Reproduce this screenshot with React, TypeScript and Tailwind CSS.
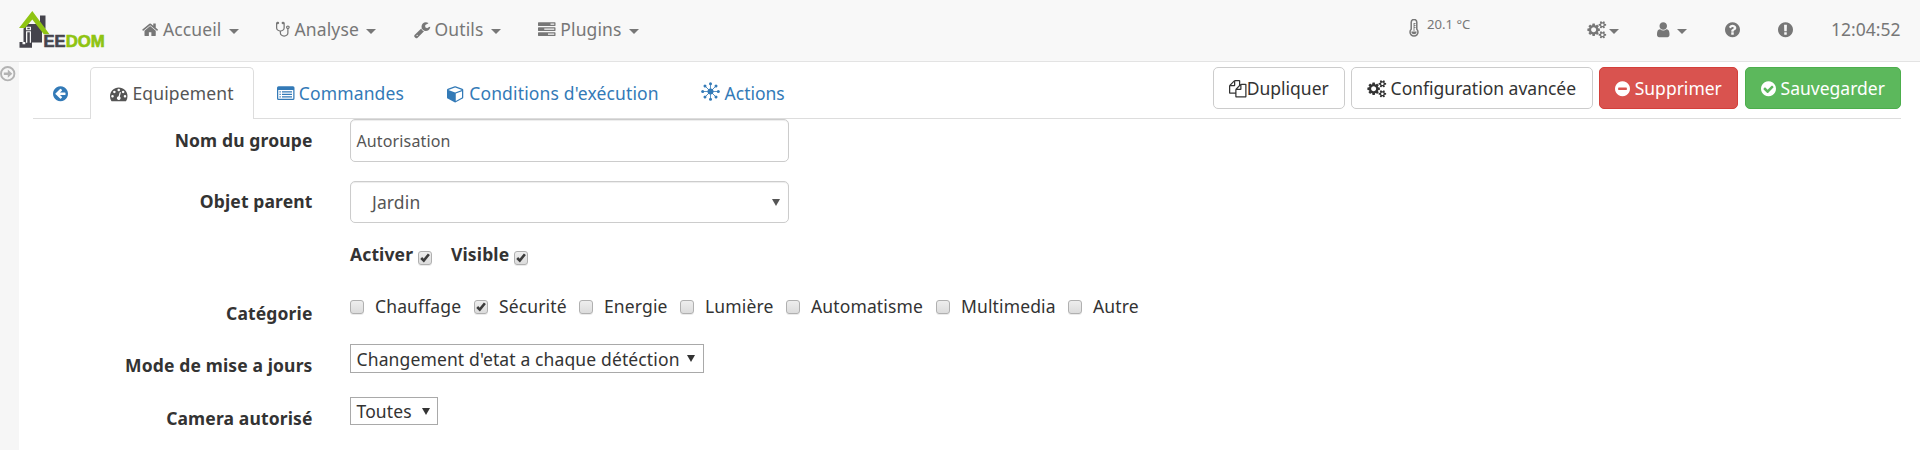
import React from "react";

const DISC =
  "M1664 896q0 209-103 385.5t-279.5 279.5-385.5 103-385.5-103-279.5-279.5-103-385.5 103-385.5 279.5-279.5 385.5-103 385.5 103 279.5 279.5 103 385.5z";
const SMALL_COG =
  "v140q0 16-149 31-12 27-30 52 51 113 51 138 0 4-4 7-122 71-124 71-8 0-46-47t-52-68q-20 2-30 2t-30-2q-14 21-52 68t-46 47q-2 0-124-71-4-3-4-7 0-25 51-138-18-25-30-52-149-15-149-31v-140q0-16 149-31 13-29 30-52-51-113-51-138 0-4 4-7 4-2 35-20t59-34 30-16q8 0 46 46.5t52 67.5q20-2 30-2t30 2q51-71 92-112l6-2q4 0 124 70 4 3 4 7 0 25-51 138 17 23 30 52 149 15 149 31z";

// name: [left, advance, path], in units of 1792 per em
const ICONS: Record<string, [number, number, string]> = {
  home: [64, 1664, "M1472 992v480q0 26-19 45t-45 19h-384v-384h-256v384h-384q-26 0-45-19t-19-45v-480q0-1 .5-3t.5-3l575-474 575 474q1 2 1 6zm223-69l-62 74q-8 9-21 11h-3q-13 0-21-7l-692-577-692 577q-12 8-24 7-13-2-21-11l-62-74q-8-10-7-23.5t11-21.5l719-599q32-26 76-26t76 26l244 204v-195q0-14 9-23t23-9h192q14 0 23 9t9 23v408l219 182q10 8 11 21.5t-7 23.5z"],
  stethoscope: [64, 1408, "M1344 640q0-26-19-45t-45-19-45 19-19 45 19 45 45 19 45-19 19-45zm128 0q0 62-35.5 111t-92.5 70v395q0 159-131.5 271.5t-316.5 112.5-316.5-112.5-131.5-271.5v-132q-164-20-274-128t-110-252v-512q0-26 19-45t45-19q6 0 16 2 17-30 47-48t65-18q53 0 90.5 37.5t37.5 90.5-37.5 90.5-90.5 37.5q-33 0-64-18v402q0 106 94 181t226 75 226-75 94-181v-402q-31 18-64 18-53 0-90.5-37.5t-37.5-90.5 37.5-90.5 90.5-37.5q35 0 65 18t47 48q10-2 16-2 26 0 45 19t19 45v512q0 144-110 252t-274 128v132q0 106 94 181t226 75 226-75 94-181v-395q-57-21-92.5-70t-35.5-111q0-80 56-136t136-56 136 56 56 136z"],
  wrench: [64, 1664, "M448 1472q0-26-19-45t-45-19-45 19-19 45 19 45 45 19 45-19 19-45zm644-420l-682 682q-37 37-90 37-52 0-91-37l-106-108q-38-36-38-90 0-53 38-91l681-681q39 98 114.5 173.5t173.5 114.5zm634-435q0 39-23 106-47 134-164.5 217.5t-258.5 83.5q-185 0-316.5-131.5t-131.5-316.5 131.5-316.5 316.5-131.5q58 0 121.5 16.5t107.5 46.5q16 11 16 28t-16 28l-293 169v224l193 107q5-3 79-48.5t135.5-81 70.5-35.5q15 0 23.5 10t8.5 25z"],
  tasks: [0, 1792, "M1024 1408h640v-128h-640v128zm-384-512h1024v-128h-1024v128zm640-512h384v-128h-384v128zm512 832v256q0 26-19 45t-45 19h-1664q-26 0-45-19t-19-45v-256q0-26 19-45t45-19h1664q26 0 45 19t19 45zm0-512v256q0 26-19 45t-45 19h-1664q-26 0-45-19t-19-45v-256q0-26 19-45t45-19h1664q26 0 45 19t19 45zm0-512v256q0 26-19 45t-45 19h-1664q-26 0-45-19t-19-45v-256q0-26 19-45t45-19h1664q26 0 45 19t19 45z"],
  gauge: [0, 1792, "M384 1152q0-53-37.5-90.5t-90.5-37.5-90.5 37.5-37.5 90.5 37.5 90.5 90.5 37.5 90.5-37.5 37.5-90.5zm192-448q0-53-37.5-90.5t-90.5-37.5-90.5 37.5-37.5 90.5 37.5 90.5 90.5 37.5 90.5-37.5 37.5-90.5zm428 481l101-382q6-26-7.5-48.5t-38.5-29.5-48 6.5-30 39.5l-101 382q-60 5-107 43.5t-63 98.5q-20 77 20 146t117 89 146-20 89-117q16-60-6-117t-72-91zm660-33q0-53-37.5-90.5t-90.5-37.5-90.5 37.5-37.5 90.5 37.5 90.5 90.5 37.5 90.5-37.5 37.5-90.5zm-640-640q0-53-37.5-90.5t-90.5-37.5-90.5 37.5-37.5 90.5 37.5 90.5 90.5 37.5 90.5-37.5 37.5-90.5zm448 192q0-53-37.5-90.5t-90.5-37.5-90.5 37.5-37.5 90.5 37.5 90.5 90.5 37.5 90.5-37.5 37.5-90.5zm320 448q0 261-141 483-19 29-54 29h-1402q-35 0-54-29-141-221-141-483 0-182 71-348t191-286 286-191 348-71 348 71 286 191 191 286 71 348z"],
  list: [0, 1792, "M160 128h1472a160 160 0 0 1 160 160v1088a160 160 0 0 1-160 160H160A160 160 0 0 1 0 1376V288A160 160 0 0 1 160 128zM128 512v832q0 64 32 64h1472q32 0 32-64V512zM256 640h128v128H256zM512 640h1024v128H512zM256 896h128v128H256zM512 896h1024v128H512zM256 1152h128v128H256zM512 1152h1024v128H512z"],
  cube: [0, 1792, "M896 1629l640-349v-636l-640 233v752zm-64-865l698-254-698-254-698 254zm832-252v768q0 35-18 65t-49 47l-704 384q-28 16-61 16t-61-16l-704-384q-31-17-49-47t-18-65v-768q0-40 23-73t61-47l704-256q22-8 44-8t44 8l704 256q38 14 61 47t23 73z"],
  copy: [0, 1792, "M1696 384q40 0 68 28t28 68v1216q0 40-28 68t-68 28h-960q-40 0-68-28t-28-68v-288h-544q-40 0-68-28t-28-68v-672q0-40 20-88t48-76l408-408q28-28 76-48t88-20h416q40 0 68 28t28 68v328q68-40 128-40h416zm-544 213l-299 299h299v-299zm-640-384l-299 299h299v-299zm196 647l316-316v-416h-384v416q0 40-28 68t-68 28h-416v640h512v-256q0-40 20-88t48-76zm956 804v-1152h-384v416q0 40-28 68t-68 28h-416v640h896z"],
  cogs: [0, 1856, "M832 896q0-106-75-181t-181-75-181 75-75 181 75 181 181 75 181-75 75-181zm768 512q0-52-38-90t-90-38-90 38-38 90q0 53 37.5 90.5t90.5 37.5 90.5-37.5 37.5-90.5zm0-1024q0-52-38-90t-90-38-90 38-38 90q0 53 37.5 90.5t90.5 37.5 90.5-37.5 37.5-90.5zm-384 421v185q0 10-7 19.5t-16 10.5l-155 24q-11 35-32 76 34 48 90 115 7 11 7 20 0 12-7 19-23 30-82.5 89.5t-78.5 59.5q-11 0-21-7l-115-90q-37 19-77 31-11 108-23 155-7 24-30 24h-186q-11 0-20-7.5t-10-17.5l-23-153q-34-10-75-31l-118 89q-7 7-20 7-11 0-21-8-144-133-144-160 0-9 7-19 10-14 41-53t47-61q-23-44-35-82l-152-24q-10-1-17-9.5t-7-19.5v-185q0-10 7-19.5t16-10.5l155-24q11-35 32-76-34-48-90-115-7-11-7-20 0-12 7-20 22-30 82-89t79-59q11 0 21 7l115 90q34-18 77-32 11-108 23-154 7-24 30-24h186q11 0 20 7.5t10 17.5l23 153q34 10 75 31l118-89q8-7 20-7 11 0 21 8 144 133 144 160 0 8-7 19-12 16-42 54t-45 60q23 48 34 82l152 23q10 2 17 10.5t7 19.5zM1856 1338" + SMALL_COG + "M1856 314" + SMALL_COG],
  user: [256, 1280, "M1536 1399q0 109-62.5 187t-150.5 78h-854q-88 0-150.5-78t-62.5-187q0-85 8.5-160.5t31.5-152 58.5-131 94-89 134.5-34.5q131 128 313 128t313-128q76 0 134.5 34.5t94 89 58.5 131 31.5 152 8.5 160.5zm-256-887q0 159-112.5 271.5t-271.5 112.5-271.5-112.5-112.5-271.5 112.5-271.5 271.5-112.5 271.5 112.5 112.5 271.5z"],
  question: [128, 1536, "M1024 1376v-192q0-14-9-23t-23-9h-192q-14 0-23 9t-9 23v192q0 14 9 23t23 9h192q14 0 23-9t9-23zm256-672q0-88-55.5-163t-138.5-116-170-41q-243 0-371 213-15 24 8 42l132 100q7 6 19 6 16 0 25-12 53-68 86-92 34-24 86-24 48 0 85.5 26t37.5 59q0 38-20 61t-68 45q-63 28-115.5 86.5t-52.5 125.5v36q0 14 9 23t23 9h192q14 0 23-9t9-23q0-19 21.5-49.5t54.5-49.5q32-18 49-28.5t46-35 44.5-48 28-60.5 12.5-81z" + DISC],
  exclamation: [128, 1536, "M1024 1375v-190q0-14-9.5-23.5t-22.5-9.5h-192q-13 0-23 10t-10 23v190q0 13 10 23t23 10h192q13 0 22.5-9.5t9.5-23.5zm-2-344l18-621q0-12-10-18-10-8-24-8h-220q-14 0-24 8-10 6-10 18l17 621q0 10 10 17.5t24 7.5h185q14 0 23.5-7.5t10.5-17.5z" + DISC],
  minus: [128, 1536, "M1344 960v-128q0-26-19-45t-45-19h-768q-26 0-45 19t-19 45v128q0 26 19 45t45 19h768q26 0 45-19t19-45z" + DISC],
  check: [128, 1536, "M1412 734q0-28-18-46l-91-90q-19-19-45-19t-45 19l-408 407-226-226q-19-19-45-19t-45 19l-91 90q-18 18-18 46 0 27 18 45l362 362q19 19 45 19 27 0 46-19l543-543q18-18 18-45z" + DISC],
  back: [128, 1536, "M1408 960v-128q0-26-19-45t-45-19h-502l189-189q19-19 19-45t-19-45l-91-91q-18-18-45-18t-45 18l-362 362-91 91q-18 18-18 45t18 45l91 91 362 362q18 18 45 18t45-18l91-91q18-18 18-45t-18-45l-189-189h502q26 0 45-19t19-45z" + DISC],
};

function Icon({ name }: { name: string }) {
  const [x, w, d] = ICONS[name];
  return (
    <svg
      className="inline-block shrink-0 align-[-2.5px] overflow-visible"
      width={(w / 1792) * 17.5}
      height={17.5}
      viewBox={`${x} 0 ${w} 1792`}
      fill="currentColor"
      fillRule="evenodd"
    >
      <path d={d} />
    </svg>
  );
}

function Caret() {
  return (
    <span className="ml-[2.5px] inline-block border-x-[5px] border-t-[5px] border-x-transparent border-t-current align-middle" />
  );
}

function Logo() {
  return (
    <svg width="92" height="46" viewBox="0 0 92 46" className="block overflow-visible">
      <path d="M21 5.5h5.5V19L21 14z" fill="#45444c" />
      <path d="M4.5 18.5 9 14h9l5 6v12.5H13v5.2H.5V32h3v2.3h2.8V32H4.5z" fill="#45444c" />
      <path d="M0 18 13.3 1l17.2 23.3h-5.7L13.3 9.5 6 18z" fill="#8fc412" />
      <path d="M7 16.8h5v3.4H7zM7 21.2h5v11.6H7z" fill="#f8f8f8" />
      <path d="M8.3 17.8h2.5v1.5H8.3zM8.3 22.2h2.5v11H8.3z" fill="#45444c" />
      <g fontFamily="'Liberation Sans', sans-serif" fontSize="17" fontWeight="700" strokeWidth="0.7">
        <text x="24.6" y="37.2" textLength="22" lengthAdjust="spacingAndGlyphs" fill="#45444c" stroke="#45444c">EE</text>
        <text x="46.8" y="37.2" textLength="39" lengthAdjust="spacingAndGlyphs" fill="#8fc412" stroke="#8fc412">DOM</text>
      </g>
    </svg>
  );
}

function Burst() {
  const angles = [0, 45, 90, 135, 180, 225, 270, 315];
  return (
    <svg width="19" height="19" viewBox="-9.5 -9.5 19 19" className="inline-block align-[-1px]" fill="currentColor" stroke="currentColor">
      <circle r="3" stroke="none" />
      {angles.map((a) => (
        <g key={a} transform={`rotate(${a})`}>
          <path d="M0 0V-7" strokeWidth="0.8" />
          <circle cy="-7.8" r="1.5" stroke="none" />
        </g>
      ))}
    </svg>
  );
}

function Thermometer() {
  return (
    <svg width="10" height="18" viewBox="0 0 10 18" fill="none" stroke="currentColor">
      <path d="M2.2 10.2V3.3a2.8 2.8 0 0 1 5.6 0v6.9a4 4 0 1 1-5.6 0z" strokeWidth="1.5" />
      <path d="M5 4v8M5 4.5h1.6M5 6.5h1.6M5 8.5h1.6" strokeWidth="0.9" />
      <path d="M2.4 12.6h5.2a2.6 2.6 0 0 1-5.2 0z" fill="currentColor" stroke="none" />
    </svg>
  );
}

function Checkbox({ checked = false }: { checked?: boolean }) {
  return (
    <span className="block size-[14px] shrink-0 rounded-[3px] border border-[#b0b0b0] bg-linear-to-b from-[#eeeeee] to-[#dcdcdc] shadow-[0_1px_0_rgba(0,0,0,0.08)]">
      {checked && (
        <svg viewBox="0 0 12 12" className="block size-3" fill="none" stroke="#3c3c3c" strokeWidth="2.6">
          <path d="M2.2 6 4.8 8.6 9.9 2.3" />
        </svg>
      )}
    </span>
  );
}

function Arrow() {
  return <span className="block border-x-[4px] border-t-[7px] border-x-transparent border-t-current" />;
}

const MENUS = [
  ["home", "Accueil"],
  ["stethoscope", "Analyse"],
  ["wrench", "Outils"],
  ["tasks", "Plugins"],
];

const LABEL = "w-[312.5px] shrink-0 text-right font-bold";

function Categories() {
  return (
    <div className="ml-[37.5px] flex h-[25px]">
      {[
        ["Chauffage", "w-[124px]"],
        ["Sécurité", "w-[105px]"],
        ["Energie", "w-[101px]"],
        ["Lumière", "w-[106px]"],
        ["Automatisme", "w-[150px]"],
        ["Multimedia", "w-[132px]"],
        ["Autre", "w-[90px]"],
      ].map(([t, w]) => (
        <label key={t} className={`flex items-start gap-[11px] ${w}`}>
          <span className="mt-[6px]">
            <Checkbox checked={t === "Sécurité"} />
          </span>
          {t}
        </label>
      ))}
    </div>
  );
}

export default function App() {
  return (
    <div className="flex h-[450px] w-[1920px] flex-col overflow-hidden bg-white font-['Noto_Sans',sans-serif] text-[17.5px] leading-[25px] text-[#333]">
      <nav className="flex h-[62px] shrink-0 border-b border-[#e3e3e3] bg-[#f8f8f8] text-[#777]">
        <div className="ml-[19px] w-[123px] pt-[10px]">
          <Logo />
        </div>
        <div className="flex gap-[37.5px] pt-[17px] tracking-[0.12px]">
          {MENUS.map(([icon, label]) => (
            <span key={label} className="whitespace-nowrap">
              <Icon name={icon} /> {label} <Caret />
            </span>
          ))}
        </div>
        <div className="ml-auto flex pt-[17px] pr-[19.5px]">
          <span className="mt-[2px] w-[18px]">
            <Thermometer />
          </span>
          <span className="-mt-[5px] w-[161px] text-[13.1px]">20.1 °C</span>
          <span className="w-[69px] whitespace-nowrap">
            <Icon name="cogs" />
            <Caret />
          </span>
          <span className="w-[67.5px]">
            <Icon name="user" /> <Caret />
          </span>
          <span className="w-[53px]">
            <Icon name="question" />
          </span>
          <span className="w-[53.5px]">
            <Icon name="exclamation" />
          </span>
          <span>12:04:52</span>
        </div>
      </nav>

      <div className="flex min-h-0 flex-1">
        <aside className="w-[19px] shrink-0 bg-[#f6f6f6] pt-[4px] text-[#b3b3b3]">
          <svg width="16" height="16" viewBox="0 0 16 16" fill="none" stroke="currentColor">
            <circle cx="7.7" cy="7.7" r="6.7" strokeWidth="1.9" />
            <path d="M3.8 6.4h4V3.6l4.5 4.1-4.5 4.1V9h-4z" fill="currentColor" stroke="none" />
          </svg>
        </aside>
        <main className="min-w-0 flex-1">
          <div className="ml-[14px] flex h-[57px] w-[1868px] border-b border-[#ddd] pt-[5px]">
            <div className="flex h-[52px] tracking-[0.15px] text-[#337ab7]">
              <span className="w-[57px] pt-[14px] pl-[19.75px]">
                <Icon name="back" />
              </span>
              <span className="h-[52px] w-[164px] rounded-t-[5px] border border-b-0 border-[#ddd] bg-white pt-[13px] pl-[19.25px] text-[#555]">
                <Icon name="gauge" /> Equipement
              </span>
              <span className="ml-[22.5px] w-[170.5px] pt-[14px] whitespace-nowrap">
                <Icon name="list" /> Commandes
              </span>
              <span className="w-[254px] pt-[14px] whitespace-nowrap">
                <Icon name="cube" /> Conditions d'exécution
              </span>
              <span className="pt-[14px] tracking-normal whitespace-nowrap">
                <Burst /> Actions
              </span>
            </div>
            <div className="ml-auto flex h-[42px] gap-[6px] leading-[40px] whitespace-nowrap">
              <button className="w-[132px] rounded-[5px] border border-[#ccc] bg-white">
                <Icon name="copy" />
                Dupliquer
              </button>
              <button className="w-[242px] rounded-[5px] border border-[#ccc] bg-white">
                <Icon name="cogs" /> Configuration avancée
              </button>
              <button className="mr-px w-[139px] rounded-[5px] border border-[#d43f3a] bg-[#d9534f] text-white">
                <Icon name="minus" /> Supprimer
              </button>
              <button className="w-[156px] rounded-[5px] border border-[#4cae4c] bg-[#5cb85c] text-white">
                <Icon name="check" /> Sauvegarder
              </button>
            </div>
          </div>

          <form className="-ml-[19px] flex flex-col tracking-[0.13px]">
            <div className="flex h-[62px]">
              <label className={`${LABEL} pt-[9px]`}>Nom du groupe</label>
              <div className="ml-[37.5px] h-[43px] w-[439px] rounded-[5px] border border-[#ccc] pt-[9px] pl-[5.5px] text-[16px] text-[#555] shadow-[inset_0_1px_1px_rgba(0,0,0,0.075)]">
                Autorisation
              </div>
            </div>
            <div className="flex h-[58px]">
              <label className={`${LABEL} pt-[8px]`}>Objet parent</label>
              <div className="ml-[37.5px] flex h-[42px] w-[439px] items-center justify-between rounded-[5px] border border-[#ccc] pr-[8px] pl-[21px] text-[#555] shadow-[inset_0_1px_1px_rgba(0,0,0,0.075)]">
                Jardin
                <Arrow />
              </div>
            </div>
            <div className="flex h-[55px] pl-[350px] font-bold">
              <label className="flex w-[101px] gap-[5px] pt-[3px]">
                Activer
                <span className="mt-[9px]">
                  <Checkbox checked />
                </span>
              </label>
              <label className="flex gap-[5px] pt-[3px]">
                Visible
                <span className="mt-[9px]">
                  <Checkbox checked />
                </span>
              </label>
            </div>
            <div className="flex h-[50px]">
              <label className={`${LABEL} pt-[7px]`}>Catégorie</label>
              <Categories />
            </div>
            <div className="flex h-[53px]">
              <label className={`${LABEL} pt-[9px]`}>Mode de mise a jours</label>
              <div className="ml-[37.5px] flex h-[29px] w-[354px] items-center justify-between border border-[#a9a9a9] pr-[8px] pl-[5.5px] whitespace-nowrap">
                <span className="pt-[2px]">Changement d'etat a chaque détéction</span>
                <Arrow />
              </div>
            </div>
            <div className="flex h-[40px]">
              <label className={`${LABEL} pt-[9px]`}>Camera autorisé</label>
              <div className="ml-[37.5px] flex h-[28px] w-[88px] items-center justify-between border border-[#a9a9a9] pr-[7px] pl-[5.5px]">
                Toutes
                <Arrow />
              </div>
            </div>
          </form>
        </main>
      </div>
    </div>
  );
}
